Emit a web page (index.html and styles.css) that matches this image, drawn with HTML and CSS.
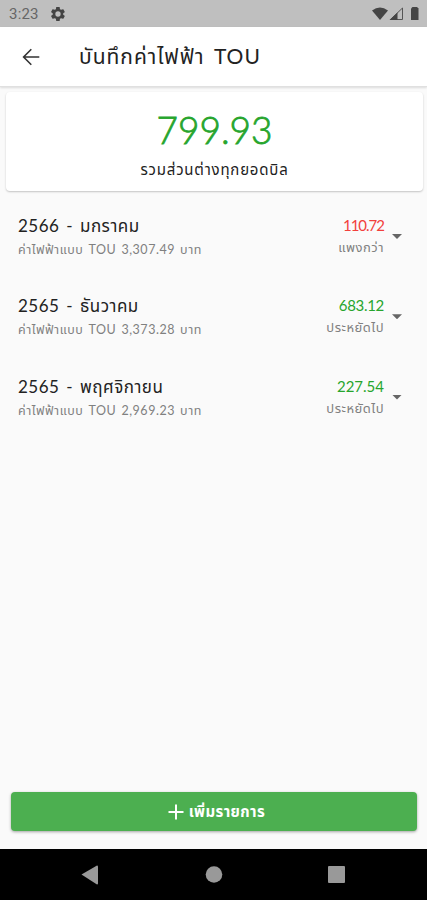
FILE: index.html
```
<!DOCTYPE html>
<html lang="th">
<head>
  <meta charset="UTF-8" />
  <meta name="viewport" content="width=device-width, initial-scale=1" />
  <title>บันทึกค่าไฟฟ้า TOU</title>
  <link rel="stylesheet" href="styles.css">
</head>
<body>
  <div class="statusbar">
    <span class="clock">3:23</span>
    <svg class="gear" viewBox="2 2 20 20" width="14" height="14"><path fill="#444" fill-rule="evenodd" d="M19.4 13c.1-.6.1-1.4 0-2l2.1-1.6c.2-.2.3-.4.1-.7l-2-3.4c-.1-.2-.4-.3-.6-.2l-2.5 1c-.5-.4-1.1-.7-1.7-1l-.4-2.6c0-.3-.2-.5-.5-.5h-4c-.3 0-.5.2-.5.5L9 5.1c-.6.3-1.2.6-1.7 1l-2.5-1c-.2-.1-.5 0-.6.2l-2 3.4c-.1.3 0 .5.1.7L4.500 11c-.1.6-.1 1.4 0 2l-2.2 1.6c-.1.2-.2.4-.1.7l2 3.4c.1.2.4.3.6.2l2.5-1c.5.4 1.100.7 1.7 1l.4 2.6c0 .3.2.5.5.5h4c.3 0 .5-.2.5-.5l.4-2.6c.6-.3 1.2-.6 1.7-1l2.500 1c.2.1.5 0 .6-.2l2-3.4c.2-.3.1-.5-.1-.7zM12 8.200a3.800 3.800 0 1 0 0 7.600 3.800 3.800 0 0 0 0-7.600z"/></svg>
    <svg class="signals" viewBox="0 0 50 16" width="50" height="16">
      <path fill="#454545" d="M1 4.500Q9 -1.500 17 4.500L9 14z"/>
      <path fill="none" stroke="#555" d="M19.500 13.500L31.500 2v11.500z"/>
      <path fill="#454545" d="M18.500 14L26.500 6.500V14z"/>
      <path fill="#454545" d="M40 2.500l1.500-1.500h4.500l1.500 1.500V14H40z"/>
    </svg>
  </div>

  <header>
    <svg class="back" viewBox="0 0 18 18" width="18" height="18"><path fill="none" stroke="#333" stroke-width="1.600" d="M17.300 9H2M9.300 1.300L1.600 9l7.700 7.700"/></svg>
    <h1>บันทึกค่าไฟฟ้า TOU</h1>
  </header>

  <main>
    <div class="card">
      <div class="total">799.93</div>
      <div class="caption">รวมส่วนต่างทุกยอดบิล</div>
    </div>

    <ul class="lista">
      <li>
        <div class="info">
          <div class="mes">2566 - มกราคม</div>
          <div class="detalle">ค่าไฟฟ้าแบบ TOU 3,307.49 บาท</div>
        </div>
        <div class="resultado">
          <div class="monto rojo">110.72</div>
          <div class="nota">แพงกว่า</div>
        </div>
        <span class="flecha"></span>
      </li>
      <li>
        <div class="info">
          <div class="mes">2565 - ธันวาคม</div>
          <div class="detalle">ค่าไฟฟ้าแบบ TOU 3,373.28 บาท</div>
        </div>
        <div class="resultado">
          <div class="monto junto">683.12</div>
          <div class="nota">ประหยัดไป</div>
        </div>
        <span class="flecha"></span>
      </li>
      <li>
        <div class="info">
          <div class="mes">2565 - พฤศจิกายน</div>
          <div class="detalle">ค่าไฟฟ้าแบบ TOU 2,969.23 บาท</div>
        </div>
        <div class="resultado">
          <div class="monto">227.54</div>
          <div class="nota">ประหยัดไป</div>
        </div>
        <span class="flecha"></span>
      </li>
    </ul>

    <button class="agregar">
      <svg viewBox="0 0 16 16" width="16" height="16"><path stroke="#fff" stroke-width="2" d="M8 .5v15M.5 8h15"/></svg>
      <span>เพิ่มรายการ</span>
    </button>
  </main>

  <nav>
    <svg viewBox="0 0 427 51" width="427" height="51">
      <path fill="#999" d="M81.500 25.500L97 16.500q1 0 1 1v17q0 1-1 1z"/>
      <circle fill="#999" cx="214" cy="25.500" r="8.300"/>
      <rect fill="#999" x="328" y="17" width="17" height="17" rx="1"/>
    </svg>
  </nav>
</body>
</html>
```
FILE: styles.css
```
:root {
  --green: #27a52d;
  --button: #4caf50;
  --red: #f2403c;
  --background: #fafafa;
  --text: #222;
  --muted: #808080;
}

* {
  box-sizing: border-box;
}

body {
  margin: 0;
  height: 900px;
  display: flex;
  flex-direction: column;
  overflow: hidden;
  font-family: Lato, 'Noto Sans Thai', 'Noto Sans', sans-serif;
  background: var(--background);
  color: var(--text);
  white-space: nowrap;
}

.statusbar {
  height: 27px;
  flex: none;
  display: flex;
  align-items: center;
  padding: 0 6px 0 9px;
  background: #bfbfbf;
}

.clock {
  width: 42px;
  font: 15px Roboto, sans-serif;
  letter-spacing: 0.2px;
  color: #666;
}

.signals {
  margin-left: auto;
}

header {
  height: 60px;
  flex: none;
  display: flex;
  align-items: center;
  padding-left: 22px;
  background: #fff;
  border-bottom: 1px solid #e0e0e0;
  box-shadow: 0 1px 2px rgba(0, 0, 0, 0.12);
}

h1 {
  margin: 0 0 0 39px;
  padding-top: 2px;
  font-size: 21px;
  font-weight: 400;
  letter-spacing: 1px;
  word-spacing: 3px;
}

main {
  flex: 1;
  display: flex;
  flex-direction: column;
  padding: 5px 4px 18px 6px;
}

.card {
  height: 99px;
  padding-top: 14px;
  background: #fff;
  border-radius: 4px;
  box-shadow: 0 1px 2px rgba(0, 0, 0, 0.22);
  text-align: center;
}

.total {
  font-size: 37px;
  font-weight: 300;
  line-height: 48px;
  color: var(--green);
  -webkit-text-stroke: 0.8px var(--green);
}

.caption {
  margin-top: 4px;
  font-size: 15px;
  line-height: 22px;
  letter-spacing: 0.8px;
}

.lista {
  flex: 1;
  margin: 0;
  padding: 23px 21px 0 12px;
  list-style: none;
}

.lista li {
  height: 80.3px;
  display: flex;
}

.info {
  flex: 1;
}

.mes {
  font-size: 17px;
  line-height: 23px;
  letter-spacing: 0.5px;
  word-spacing: 2px;
}

.detalle {
  font-size: 12.5px;
  line-height: 25px;
  letter-spacing: 0.55px;
  word-spacing: 1.3px;
  color: var(--muted);
}

.resultado {
  text-align: right;
}

.monto {
  font-size: 15px;
  line-height: 23px;
  color: var(--green);
}

.junto {
  letter-spacing: -0.3px;
}

.rojo {
  letter-spacing: -1px;
  color: var(--red);
}

.nota {
  font-size: 13px;
  line-height: 20px;
  letter-spacing: 0.5px;
  color: var(--muted);
}

.flecha {
  margin: 20px 0 0 8px;
  width: 10px;
  height: 5px;
  background: #666;
  clip-path: polygon(0 0, 100% 0, 50% 100%);
}

.agregar {
  height: 39px;
  margin: 0 6px 0 5px;
  padding: 2px 0 0 5px;
  display: flex;
  align-items: center;
  justify-content: center;
  gap: 5px;
  border: none;
  border-radius: 4px;
  background: var(--button);
  box-shadow: 0 1px 3px rgba(0, 0, 0, 0.35);
  color: #fff;
  font: bold 15px Lato, 'Noto Sans Thai', sans-serif;
  letter-spacing: 0.4px;
}

.agregar svg {
  margin-bottom: 2px;
}

nav {
  height: 51px;
  flex: none;
  background: #000;
}
```
